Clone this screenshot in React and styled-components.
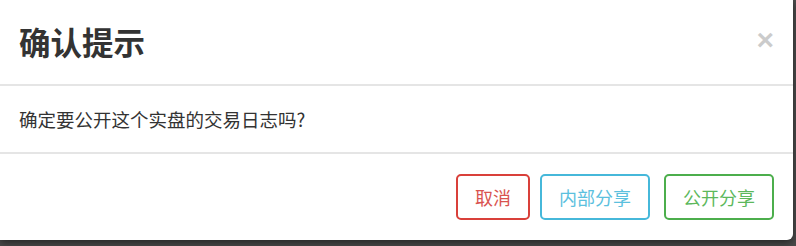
import React from 'react';
import styled, { createGlobalStyle } from 'styled-components';

const GlobalStyle = createGlobalStyle`
  html, body {
    margin: 0;
    padding: 0;
    background: #4b4b4b;
  }
  body {
    font-family: "Noto Sans CJK SC", "Noto Sans", "Liberation Sans", sans-serif;
    color: #333;
  }
`;

const Backdrop = styled.div`
  width: 796px;
  height: 246px;
  background: #4b4b4b;
  overflow: hidden;
`;

const Dialog = styled.div`
  width: 793px;
  height: 240px;
  background: #fff;
  border-radius: 0 0 6px 0;
  box-shadow: 0 3px 9px rgba(0, 0, 0, 0.5);
  display: flex;
  flex-direction: column;
`;

const Header = styled.div`
  height: 84px;
  flex: none;
  display: flex;
  align-items: center;
  justify-content: space-between;
  padding: 0 19px;
  border-bottom: 2px solid #e5e5e5;
`;

const Title = styled.h4`
  margin: 0;
  font-size: 31.5px;
  font-weight: 700;
  line-height: 1;
  color: #333;
`;

const Close = styled.button`
  border: 0;
  background: none;
  padding: 0;
  font-family: "Liberation Sans", sans-serif;
  font-size: 30px;
  font-weight: 700;
  line-height: 1;
  color: #000;
  opacity: 0.2;
  cursor: pointer;
  margin-top: -4px;
`;

const Body = styled.div`
  height: 66px;
  flex: none;
  display: flex;
  align-items: center;
  padding: 0 19px;
  font-size: 18.5px;
`;

const Footer = styled.div`
  flex: 1;
  display: flex;
  align-items: center;
  justify-content: flex-end;
  padding: 0 19px;
  border-top: 2px solid #e5e5e5;
`;

const Button = styled.button`
  height: 46px;
  padding: 0 17px;
  margin-left: ${p => p.$gap || 0}px;
  background: #fff;
  border: 2px solid ${p => p.$border};
  border-radius: 5px;
  color: ${p => p.$color};
  font-family: "Noto Sans CJK SC", sans-serif;
  font-size: 18px;
  line-height: 1;
  cursor: pointer;
`;

const App = () => {
  return (
    <>
      <GlobalStyle />
      <Backdrop>
        <Dialog>
          <Header>
            <Title>确认提示</Title>
            <Close>×</Close>
          </Header>
          <Body>确定要公开这个实盘的交易日志吗?</Body>
          <Footer>
            <Button $border="#d9403a" $color="#d9534f">取消</Button>
            <Button $gap={10} $border="#46b8da" $color="#5bc0de">内部分享</Button>
            <Button $gap={14} $border="#4cae4c" $color="#5cb85c">公开分享</Button>
          </Footer>
        </Dialog>
      </Backdrop>
    </>
  );
};

export default App;
